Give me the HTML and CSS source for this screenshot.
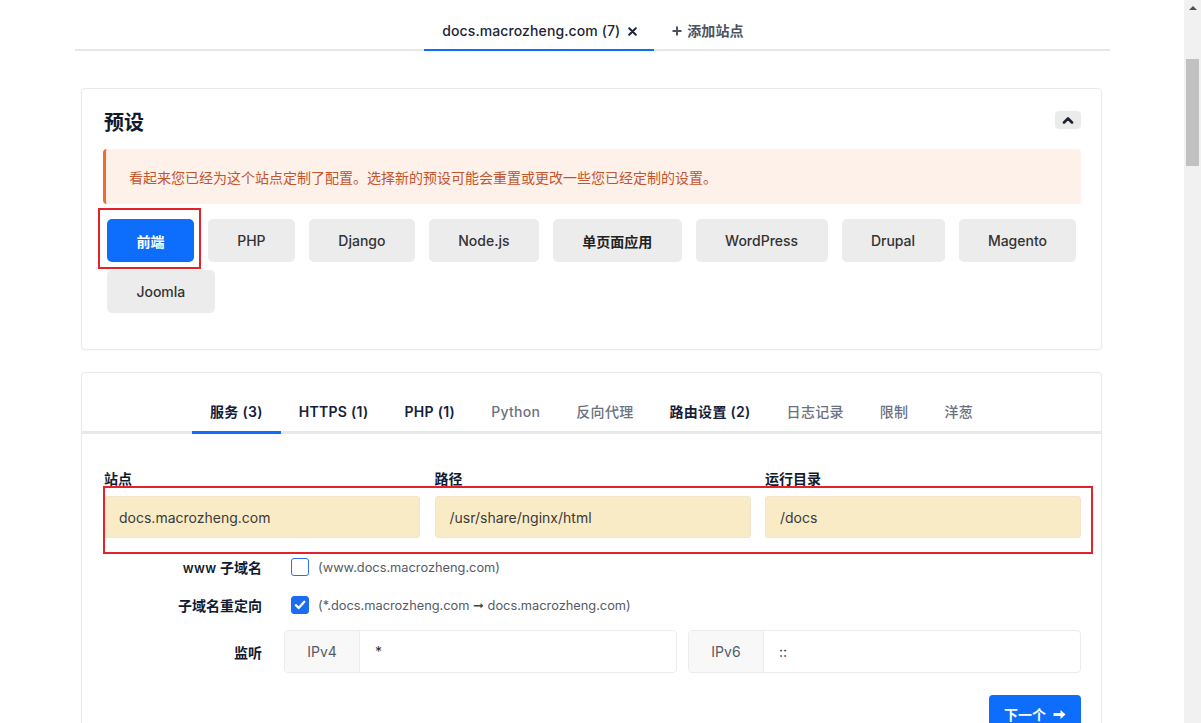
FILE: index.html
```html
<!DOCTYPE html>
<html lang="zh">
<head>
<meta charset="utf-8">
<title>NGINX 配置</title>
<link rel="stylesheet" href="styles.css">
</head>
<body>
<div class="viewport">
  <main class="page">
    <nav class="site-tabs">
      <div class="site-tab active">docs.macrozheng.com (7)
        <svg class="close" width="9" height="9" viewBox="0 0 9 9"><path d="M1.2 1.2 7.8 7.8M7.8 1.2 1.2 7.8" stroke="#1b2536" stroke-width="2" stroke-linecap="round"/></svg>
      </div>
      <div class="site-tab add">
        <svg class="plus" width="10" height="10" viewBox="0 0 10 10"><path d="M5 .5v9M.5 5h9" stroke="#4b5260" stroke-width="2"/></svg>
        添加站点
      </div>
    </nav>

    <div class="container">
      <section class="card presets">
        <header class="card-head">
          <h2 class="card-title">预设</h2>
          <button class="collapse" type="button" aria-label="收起">
            <svg width="12" height="8" viewBox="0 0 12 8"><path d="M2 6.5 6 2.5l4 4" fill="none" stroke="#1c2230" stroke-width="2.6" stroke-linecap="round" stroke-linejoin="round"/></svg>
          </button>
        </header>
        <div class="alert">看起来您已经为这个站点定制了配置。选择新的预设可能会重置或更改一些您已经定制的设置。</div>
        <div class="preset-list">
          <button class="preset selected" type="button">前端</button>
          <button class="preset" type="button">PHP</button>
          <button class="preset" type="button">Django</button>
          <button class="preset" type="button">Node.js</button>
          <button class="preset cjk" type="button">单页面应用</button>
          <button class="preset" type="button">WordPress</button>
          <button class="preset" type="button">Drupal</button>
          <button class="preset" type="button">Magento</button>
          <button class="preset" type="button">Joomla</button>
        </div>
      </section>

      <section class="card config">
        <nav class="cfg-tabs">
          <a class="cfg-tab active">服务 (3)</a>
          <a class="cfg-tab">HTTPS (1)</a>
          <a class="cfg-tab">PHP (1)</a>
          <a class="cfg-tab muted">Python</a>
          <a class="cfg-tab muted">反向代理</a>
          <a class="cfg-tab">路由设置 (2)</a>
          <a class="cfg-tab muted">日志记录</a>
          <a class="cfg-tab muted">限制</a>
          <a class="cfg-tab muted">洋葱</a>
        </nav>
        <div class="cfg-body">
          <div class="fields">
            <div class="field">
              <label class="field-label">站点</label>
              <div class="field-input">docs.macrozheng.com</div>
            </div>
            <div class="field">
              <label class="field-label">路径</label>
              <div class="field-input">/usr/share/nginx/html</div>
            </div>
            <div class="field">
              <label class="field-label">运行目录</label>
              <div class="field-input">/docs</div>
            </div>
            <span class="mark mark-fields"></span>
          </div>

          <div class="form-row first">
            <span class="row-label"><span class="www">www</span> 子域名</span>
            <span class="checkbox"></span>
            <span class="hint">(www.docs.macrozheng.com)</span>
          </div>
          <div class="form-row">
            <span class="row-label">子域名重定向</span>
            <span class="checkbox checked">
              <svg width="14" height="14" viewBox="0 0 14 14"><path d="M2.8 7.2 5.7 10 11.3 3.8" fill="none" stroke="#fff" stroke-width="2.3" stroke-linecap="round" stroke-linejoin="round"/></svg>
            </span>
            <span class="hint">(*.docs.macrozheng.com <span class="arrow">➞</span> docs.macrozheng.com)</span>
          </div>
          <div class="form-row listen">
            <span class="row-label">监听</span>
            <div class="groups">
              <div class="input-group"><span class="addon">IPv4</span><span class="group-input">*</span></div>
              <div class="input-group"><span class="addon">IPv6</span><span class="group-input">::</span></div>
            </div>
          </div>
          <div class="actions">
            <button class="next" type="button">下一个
              <svg width="13" height="11" viewBox="0 0 13 11"><path d="M0.5 4.1h7V1l5 4.5-5 4.5V6.9h-7z" fill="#fff"/></svg>
            </button>
          </div>
        </div>
      </section>
    </div>
  </main>
  <div class="scrollbar">
    <div class="sb-arrow"></div>
    <div class="sb-thumb"></div>
  </div>
</div>
</body>
</html>
```

FILE: styles.css
```css
* { box-sizing: border-box; }
html, body { margin: 0; padding: 0; }
body {
  font-family: Inter, "Noto Sans CJK SC", sans-serif;
  color: #111b30;
  background: #fff;
  font-size: 14px;
}
.viewport {
  display: flex;
  height: 723px;
  overflow: hidden;
}
.page {
  flex: 1;
  min-width: 0;
  overflow: hidden;
}

/* top site tabs */
.site-tabs {
  width: 1035px;
  margin: 0 0 0 75px;
  display: flex;
  justify-content: center;
  border-bottom: 2px solid #e5e7eb;
  height: 51px;
}
.site-tab {
  padding: 21px 17px 8px 18px;
  line-height: 20px;
  font-weight: 500;
  color: #1b2536;
  display: flex;
  align-items: center;
  gap: 6px;
  letter-spacing: 0.1px;
}
.site-tab.active {
  border-bottom: 2px solid #0d6efd;
  margin-bottom: -2px;
  height: 51px;
}
.site-tab .close { margin-left: 2px; }
.site-tab.add { color: #4b5260; font-weight: 600; gap: 5px; }

.container {
  width: 1021px;
  margin: 37px 0 0 81px;
}
.card {
  background: #fff;
  border: 1px solid #eaeaea;
  border-radius: 4px;
  box-shadow: 0 1px 2px rgba(0,0,0,0.03);
}

/* presets */
.presets { padding: 22px 20px 36px 21px; }
.card-head {
  display: flex;
  justify-content: space-between;
  align-items: flex-start;
  height: 24px;
  margin-bottom: 14px;
}
.card-title {
  margin: 0;
  font-size: 20px;
  line-height: 24px;
  font-weight: 700;
  color: #0f1a30;
  padding-left: 1px;
}
.collapse {
  width: 26px;
  height: 18px;
  border: 0;
  border-radius: 4px;
  background: #ebebeb;
  padding: 0;
  display: flex;
  align-items: center;
  justify-content: center;
}
.alert {
  height: 55px;
  display: flex;
  align-items: center;
  padding: 0 23px;
  background: #fdf1ea;
  border-left: 3px solid #f26a2c;
  border-radius: 4px;
  color: #c4542a;
  font-size: 14px;
}
.preset-list {
  margin-top: 15px;
  padding-left: 4px;
  display: flex;
  flex-wrap: wrap;
  gap: 8px 14px;
}
.preset {
  position: relative;
  height: 43px;
  padding: 0 29.4px;
  border: 0;
  border-radius: 5px;
  background: #ececec;
  color: #333;
  font-family: inherit;
  font-size: 14px;
  font-weight: 500;
}
.preset.cjk { font-weight: 700; color: #222; }
.preset.selected {
  background: #0d6efd;
  color: #fff;
  font-weight: 700;
}
.preset.selected::after {
  content: "";
  position: absolute;
  top: -11px;
  left: -9px;
  right: -7px;
  bottom: -7px;
  border: 2px solid #e3222b;
}

/* config card */
.config { margin-top: 22px; height: 400px; }
.cfg-tabs {
  display: flex;
  justify-content: center;
  border-bottom: 3px solid #e6e8eb;
}
.cfg-tab {
  padding: 29px 18px 9px;
  line-height: 20px;
  font-size: 14px;
  font-weight: 600;
  color: #14203a;
  margin-bottom: -3px;
  border-bottom: 3px solid transparent;
  letter-spacing: 0.3px;
}
.cfg-tab.muted { color: #6b7180; font-weight: 500; }
.cfg-tab.active { border-bottom-color: #0d6efd; }

.cfg-body { padding: 35px 20px 0 22px; }
.fields {
  position: relative;
  display: grid;
  grid-template-columns: repeat(3, 1fr);
  column-gap: 14.5px;
}
.field-label {
  display: block;
  line-height: 20px;
  font-weight: 700;
  color: #111b30;
  margin-bottom: 7px;
}
.field-input {
  height: 42px;
  display: flex;
  align-items: center;
  padding: 0 14px;
  background: #f9ebc5;
  border: 1px solid #f1e6cc;
  border-radius: 3px;
  color: #3a3a3a;
}
.mark-fields {
  position: absolute;
  top: 17px;
  left: -1px;
  right: -12px;
  bottom: -16px;
  border: 2px solid #e3222b;
}

.form-row {
  display: flex;
  align-items: center;
  min-height: 38px;
}
.form-row.first { margin-top: 10px; }
.row-label {
  width: 158px;
  margin-right: 22px;
  text-align: right;
  font-weight: 600;
  color: #111b30;
  flex-shrink: 0;
}
.www { font-size: 13px; letter-spacing: 0.3px; }
.checkbox {
  width: 18px;
  height: 18px;
  margin-left: 7px;
  border: 1.5px solid #2c6fe8;
  border-radius: 3px;
  display: flex;
  align-items: center;
  justify-content: center;
  flex-shrink: 0;
}
.checkbox.checked { background: #1a6cf0; border-color: #1a6cf0; }
.hint {
  margin-left: 9px;
  font-size: 12.8px;
  color: #555b66;
}
.arrow { font-family: "DejaVu Sans", sans-serif; font-size: 13px; font-weight: 700; color: #444; }

.form-row.listen { margin-top: 6px; }
.groups {
  flex: 1;
  display: flex;
  gap: 11px;
}
.input-group {
  flex: 1;
  height: 43px;
  display: flex;
  border: 1px solid #ececec;
  border-radius: 4px;
  overflow: hidden;
}
.addon {
  width: 75px;
  background: #f8f8f8;
  border-right: 1px solid #ececec;
  display: flex;
  align-items: center;
  justify-content: center;
  color: #555b66;
}
.group-input {
  flex: 1;
  display: flex;
  align-items: center;
  padding-left: 15px;
  color: #333;
}

.actions {
  margin-top: 22px;
  display: flex;
  justify-content: flex-end;
}
.next {
  width: 92px;
  height: 38px;
  border: 0;
  border-radius: 4px;
  background: #0d6efd;
  color: #fff;
  font-family: inherit;
  font-size: 14px;
  font-weight: 700;
  display: flex;
  align-items: center;
  justify-content: center;
  gap: 7px;
  padding: 0;
}

/* fake scrollbar */
.scrollbar {
  width: 17px;
  flex-shrink: 0;
  background: #f1f1f1;
  display: flex;
  flex-direction: column;
  align-items: center;
}
.sb-arrow {
  margin-top: 6px;
  width: 0;
  height: 0;
  border-left: 4px solid transparent;
  border-right: 4px solid transparent;
  border-bottom: 4px solid #505050;
}
.sb-thumb {
  margin-top: 49px;
  width: 13px;
  height: 107px;
  background: #c1c1c1;
}
```
